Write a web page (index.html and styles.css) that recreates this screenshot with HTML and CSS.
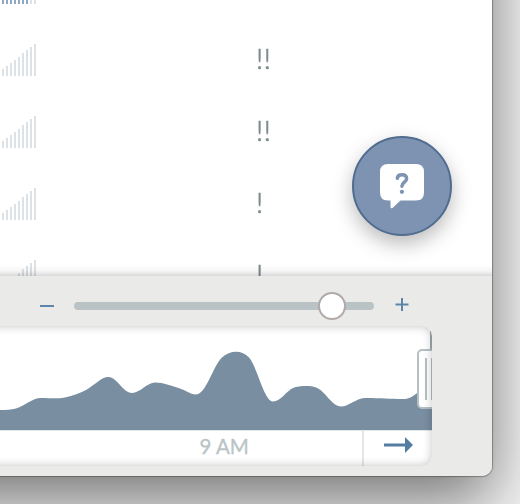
FILE: index.html
```
<!DOCTYPE html>
<html lang="en">
<head>
<meta charset="utf-8">
<title>Timeline</title>
<link rel="stylesheet" href="styles.css">
</head>
<body>
<div class="window">
  <main class="list">
    <div class="row"><div class="bars active"><i></i><i></i><i></i><i></i><i></i><i></i><i></i><i></i><i></i></div></div>
    <div class="row"><div class="bars"><i></i><i></i><i></i><i></i><i></i><i></i><i></i><i></i><i></i></div><span class="priority">!!</span></div>
    <div class="row"><div class="bars"><i></i><i></i><i></i><i></i><i></i><i></i><i></i><i></i><i></i></div><span class="priority">!!</span></div>
    <div class="row"><div class="bars"><i></i><i></i><i></i><i></i><i></i><i></i><i></i><i></i><i></i></div><span class="priority">!</span></div>
    <div class="row"><div class="bars"><i></i><i></i><i></i><i></i><i></i><i></i><i></i><i></i><i></i></div><span class="priority">!</span></div>
  </main>
  <footer class="panel">
    <div class="zoom">
      <svg class="sign" viewBox="0 0 14 14"><path d="M0 7H14"/></svg>
      <div class="track"><div class="knob"></div></div>
      <svg class="sign" viewBox="0 0 14 14"><path d="M0.500 5.500H13.500M7 -1V12"/></svg>
    </div>
    <div class="timeline">
      <svg class="chart" viewBox="0 0 432 104">
        <path d="M0 84C6 84 11 84 16 82.500C25 80 32 72 41 72C50 72 56 73 65 71.500C73 70 80 67 86 64C95 59 101 51 108.500 51C117 51 123 67 132 67C140 67 147 56.500 155 56.500C164 56.500 171 60 177 61.500C185 63.500 190 68.500 196 68.500C206 68.500 213 40 222 31.500C230 24 242 23.500 249 31.500C257 40 264 75.500 273 75.500C281 75.500 286 65 293 62C300 59.500 310 59.500 316 61.500C325 64.500 332 80.500 341 80.500C349 80.500 356 72 366 72C381 72 390 73 403 73C414 73 416 66 432 56V104H0Z"/>
      </svg>
      <div class="axis">
        <span class="hour">9 AM</span>
        <div class="next"><svg viewBox="0 0 29 16"><path d="M0 6.500H21V0L29 8L21 16V9.500H0Z"/></svg></div>
      </div>
      <div class="limit"></div>
      <div class="handle"><i></i><i></i></div>
    </div>
  </footer>
  <button class="help" aria-label="Help">
    <svg viewBox="0 0 44 45"><path class="bubble" d="M8 0H36Q44 0 44 8V28.500Q44 36.500 36 36.500H20.500L12.500 44Q10.500 45 10.500 43V36.500H8Q0 36.500 0 28.500V8Q0 0 8 0Z"/><path class="mark" d="M17.300 14.300C17.500 11.700 19.400 10.700 22 10.700C24.800 10.700 26.600 12 26.600 14.700C26.600 18.300 21.900 18 21.900 22.300"/><circle cx="21.900" cy="27.800" r="2.100"/></svg>
  </button>
</div>
</body>
</html>
```
FILE: styles.css
```
* { box-sizing: border-box; }
body {
  margin: 0;
  width: 520px;
  height: 504px;
  overflow: hidden;
  display: flex;
  background: #f4f4f4;
  font-family: Lato, sans-serif;
}
.window {
  position: relative;
  flex: none;
  width: 792px;
  height: 776px;
  margin: -300px 0 0 -300px;
  padding: 300px 0 0 300px;
  background: #fff;
  border-radius: 10px;
  box-shadow: 0 0 1px 1px rgba(0,0,0,.3), 0 25px 64px rgba(0,0,0,.52);
}
.list {
  position: relative;
  height: 276px;
  overflow: hidden;
  display: flex;
  flex-direction: column;
}
.list::after {
  content: "";
  position: absolute;
  inset: auto 0 0;
  height: 11px;
  background: linear-gradient(transparent, rgba(0,0,0,.04) 55%, rgba(0,0,0,.15));
}
.row {
  flex: none;
  display: flex;
  align-items: flex-end;
  height: 72px;
  padding-left: 2px;
}
.row:first-child { height: 4px; }
.bars { display: flex; align-items: flex-end; gap: 2px; width: 34px; height: 32px; flex: none; }
.bars i { width: 2px; background: #dde2e6; }
.bars i:nth-child(1) { height: 7px; }
.bars i:nth-child(2) { height: 10px; }
.bars i:nth-child(3) { height: 13px; }
.bars i:nth-child(4) { height: 16px; }
.bars i:nth-child(5) { height: 19.500px; }
.bars i:nth-child(6) { height: 23px; }
.bars i:nth-child(7) { height: 26px; }
.bars i:nth-child(8) { height: 29px; }
.bars i:nth-child(9) { height: 32px; }
.bars.active i:nth-child(-n+7) { background: #8faac0; }
.priority {
  margin: 0 0 2px 220px;
  font-size: 28px;
  font-weight: 300;
  line-height: 32px;
  letter-spacing: .5px;
  color: #7f8c8d;
  -webkit-text-stroke: .6px #7f8c8d;
  will-change: transform;
}
.panel { height: 200px; background: #eaeae8; border-radius: 0 0 10px 0; }
.zoom { display: flex; align-items: center; height: 50px; padding: 10px 0 0 40px; }
.sign { width: 14px; height: 14px; overflow: visible; fill: none; stroke: #5d85aa; stroke-width: 2; }
.track {
  display: flex;
  align-items: center;
  width: 300px;
  height: 8px;
  margin: 0 21px 0 20px;
  padding-left: 244px;
  border-radius: 4px;
  background: #b9c3c5;
}
.knob { flex: none; width: 28px; height: 28px; border: 2px solid #b1aaa8; border-radius: 50%; background: #fff; }
.timeline {
  position: relative;
  width: 432px;
  height: 140px;
  border-radius: 0 10px 10px 0;
  background: #fff;
  overflow: hidden;
}
.timeline::after {
  content: "";
  position: absolute;
  inset: 0 0 0 -20px;
  border-radius: 10px;
  box-shadow: inset 0 0 10px rgba(0,0,0,.24);
}
.chart { display: block; width: 432px; height: 104px; fill: #798ea1; }
.axis { display: flex; height: 36px; border-top: 1px solid #e2e7e9; }
.hour {
  width: 362px;
  padding-left: 199.500px;
  font-size: 20.500px;
  line-height: 31px;
  color: #bac4c6;
  -webkit-text-stroke: .3px #bac4c6;
}
.next { display: flex; flex: 1; padding: 6px 0 0 20px; border-left: 2px solid #e6e6e6; }
.next svg { width: 29px; height: 16px; fill: #557da2; }
.limit { position: absolute; right: 0; top: 0; width: 2px; height: 26px; background: #9faaae; }
.handle {
  position: absolute;
  left: 417px;
  top: 23px;
  display: flex;
  gap: 4px;
  width: 30px;
  height: 60px;
  padding: 7px 6px;
  border: 2px solid #b5c0c3;
  border-radius: 5px;
  background: #fff;
}
.handle i { width: 2px; height: 42px; background: #b5c0c3; }
.help {
  position: absolute;
  left: 652px;
  top: 436px;
  display: flex;
  justify-content: center;
  width: 100px;
  height: 100px;
  padding: 26px 0 0;
  border: 2px solid #506d90;
  border-radius: 50%;
  background: #7e93b2;
  box-shadow: 0 8px 20px rgba(0,0,0,.27);
}
.help svg { width: 44px; height: 45px; fill: #7e93b2; }
.bubble { fill: #fff; }
.mark { fill: none; stroke: #7e93b2; stroke-width: 3.500; stroke-linecap: round; }
```
